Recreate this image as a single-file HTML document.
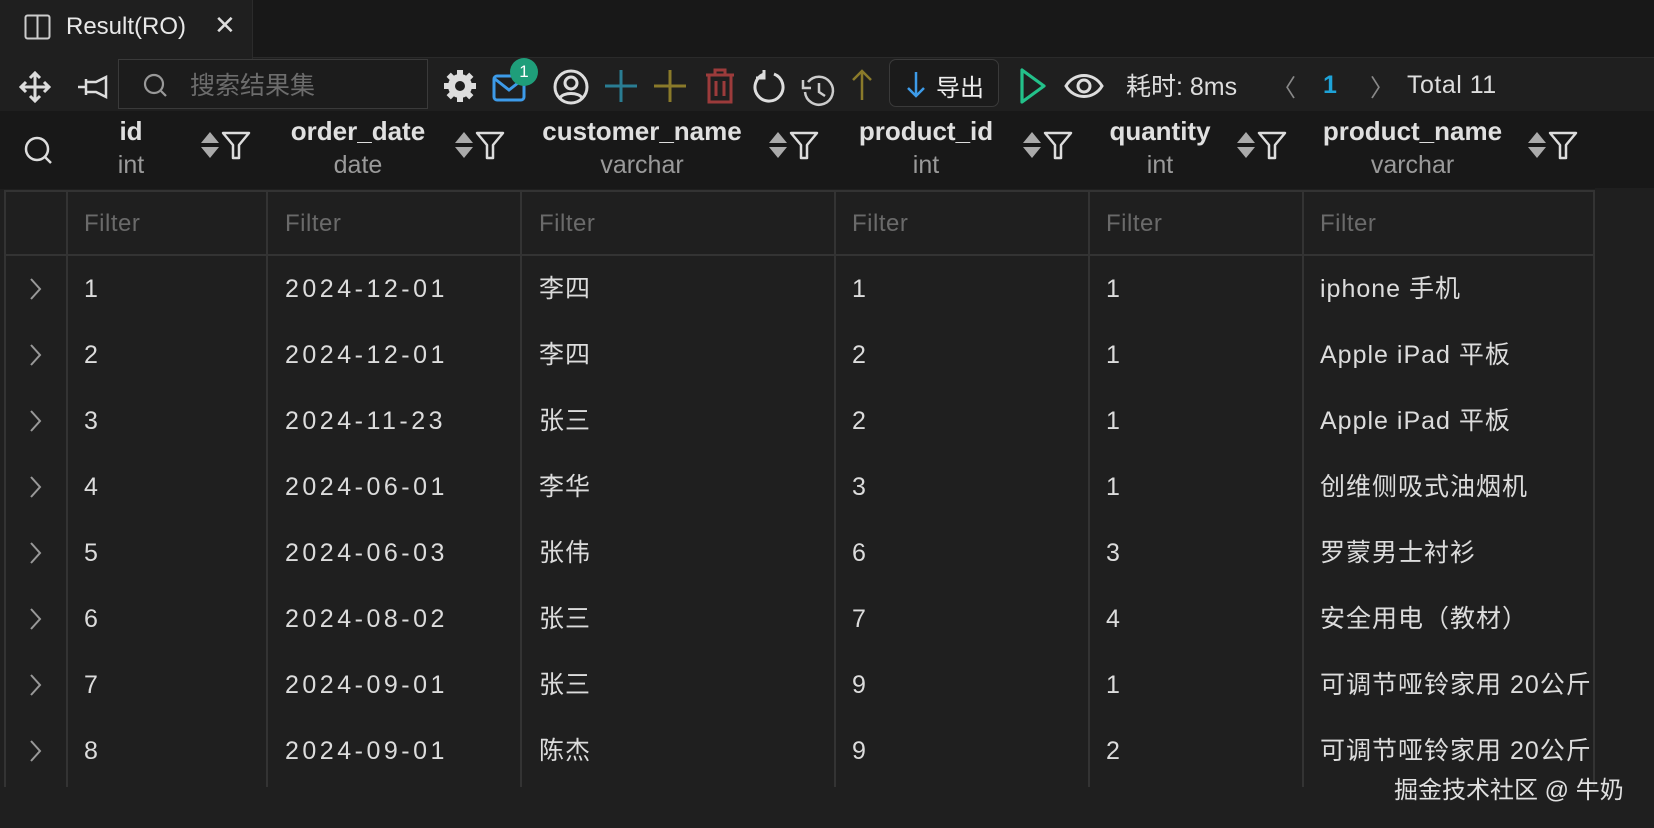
<!DOCTYPE html>
<html><head><meta charset="utf-8"><style>
*{margin:0;padding:0;box-sizing:border-box}
body{width:1654px;height:826px;background:#1f1f1f;position:relative;overflow:hidden;font-family:"Liberation Sans","Noto Sans CJK SC",sans-serif;color:#d4d4d4}
.a{position:absolute;white-space:nowrap}
.t{font-size:25px;letter-spacing:1.3px;color:#dcdcdc}
.f{font-size:24px;color:#6a6a6a;letter-spacing:.5px}
.h{font-size:26px;font-weight:bold;color:#e0e0e0;text-align:center}
.ty{font-size:25px;color:#9a9a9a;text-align:center}
.vl{position:absolute;width:2px;background:#333;top:190px;height:597px}
</style></head><body>
<div class="a" style="left:0;top:0;width:1654px;height:58px;background:#181818;border-bottom:1px solid #2a2a2a"></div>
<div class="a" style="left:0;top:0;width:253px;height:59px;background:#1f1f1f;border-right:1px solid #2b2b2b"></div>
<svg class="a" style="left:24px;top:14px" width="28" height="26"><rect x="1.5" y="1.5" width="24" height="23" rx="2" fill="none" stroke="#ccc" stroke-width="2"/><line x1="13.5" y1="2" x2="13.5" y2="24" stroke="#ccc" stroke-width="2"/></svg>
<div class="a" style="left:66px;top:13px;font-size:24px;color:#e8e8e8">Result(RO)</div>
<div class="a" style="left:214px;top:10px;font-size:26px;color:#ddd">✕</div>
<!-- toolbar -->
<svg class="a" style="left:18px;top:70px" width="34" height="34" fill="none" stroke="#ddd" stroke-width="3"><path d="M17 3v28M3 17h28M12 8l5-5 5 5M12 26l5 5 5-5M8 12l-5 5 5 5M26 12l5 5-5 5"/></svg>
<svg class="a" style="left:76px;top:73px" width="34" height="28" fill="none" stroke="#ddd" stroke-width="2.5"><path d="M2 14h8M10 6v16M10 9h10l10-5v20l-10-5H10"/></svg>
<div class="a" style="left:118px;top:59px;width:310px;height:50px;border:1px solid #3a3a3a;background:#1c1c1c"></div>
<svg class="a" style="left:142px;top:72px" width="28" height="28" fill="none" stroke="#999" stroke-width="2.2"><circle cx="12" cy="12" r="9"/><path d="M19 19l5 5"/></svg>
<div class="a" style="left:190px;top:66px;font-size:25px;color:#6c6c6c">搜索结果集</div>
<svg class="a" style="left:442px;top:68px" width="36" height="36"><g fill="#ddd"><circle cx="18" cy="18" r="12"/><g stroke="#ddd" stroke-width="6"><path d="M18 2v32M2 18h32M6.7 6.7l22.6 22.6M29.3 6.7L6.7 29.3"/></g></g><circle cx="18" cy="18" r="5" fill="#1f1f1f"/></svg>
<svg class="a" style="left:492px;top:70px" width="36" height="34" fill="none" stroke="#3d9be9" stroke-width="3"><rect x="2" y="6" width="30" height="24" rx="3"/><path d="M3 9l14 11 14-11"/></svg>
<div class="a" style="left:510px;top:58px;width:28px;height:28px;border-radius:14px;background:#1f9e7a;color:#fff;font-size:17px;text-align:center;line-height:28px">1</div>
<svg class="a" style="left:552px;top:68px" width="38" height="38" fill="none" stroke="#ddd" stroke-width="3"><circle cx="19" cy="19" r="16"/><circle cx="19" cy="15" r="6"/><path d="M8 30c3-6 19-6 22 0"/></svg>
<svg class="a" style="left:603px;top:68px" width="36" height="36" stroke="#2a7d93" stroke-width="3"><path d="M18 2v32M2 18h32"/></svg>
<svg class="a" style="left:652px;top:68px" width="36" height="36" stroke="#8a7a2a" stroke-width="3"><path d="M18 2v32M2 18h32"/></svg>
<svg class="a" style="left:704px;top:67px" width="32" height="38" fill="none" stroke="#9c3b3b" stroke-width="3"><path d="M2 8h28M11 8V3h10v5M5 8v27h22V8M12 14v15M20 14v15"/></svg>
<svg class="a" style="left:752px;top:68px" width="36" height="36" fill="none" stroke="#ddd" stroke-width="3"><path d="M12 6a14 14 0 1 0 10 0"/><path d="M12 2v8H4"/></svg>
<svg class="a" style="left:800px;top:72px" width="38" height="38" fill="none" stroke="#ccc" stroke-width="2.5"><path d="M8 10a14 14 0 1 1-3 10M3 8v8h8M19 11v9l6 4"/></svg>
<svg class="a" style="left:850px;top:68px" width="24" height="34" fill="none" stroke="#8a7a2a" stroke-width="2.5"><path d="M12 32V3M3 12l9-9 9 9"/></svg>
<div class="a" style="left:889px;top:59px;width:110px;height:48px;border:1px solid #3a3a3a;border-radius:7px;background:#1b1b1b"></div>
<svg class="a" style="left:906px;top:70px" width="20" height="28" fill="none" stroke="#3d9be9" stroke-width="2.5"><path d="M10 2v24M2 18l8 8 8-8"/></svg>
<div class="a" style="left:936px;top:68px;font-size:24px;color:#eee">导出</div>
<svg class="a" style="left:1018px;top:67px" width="30" height="38" fill="none" stroke="#23c18a" stroke-width="3.2"><path d="M4 3v32l22-16z" stroke-linejoin="round"/></svg>
<svg class="a" style="left:1064px;top:70px" width="40" height="32" fill="none" stroke="#ddd" stroke-width="3"><path d="M2 16C10 2 30 2 38 16C30 30 10 30 2 16Z"/><circle cx="20" cy="16" r="6"/></svg>
<div class="a" style="left:1126px;top:67px;font-size:25px;color:#ddd">耗时: 8ms</div>
<div class="a" style="left:1272px;top:68px;font-size:24px;color:#888">〈</div>
<div class="a" style="left:1323px;top:71px;font-size:25px;color:#1ea3d8;font-weight:bold">1</div>
<div class="a" style="left:1370px;top:68px;font-size:24px;color:#888">〉</div>
<div class="a" style="left:1407px;top:71px;font-size:25px;color:#ddd;letter-spacing:.5px">Total 11</div>
<!-- header -->
<div class="a" style="left:0;top:111px;width:1654px;height:78px;background:#181818"></div>
<svg class="a" style="left:24px;top:136px" width="30" height="30" fill="none" stroke="#ddd" stroke-width="2.5"><circle cx="13" cy="13" r="11"/><path d="M21 21l6 6"/></svg>
<div id="hdr"></div>
<!-- grid -->
<div class="a" style="left:4px;top:190px;width:1590px;height:2px;background:#333"></div>
<div class="a" style="left:4px;top:254px;width:1590px;height:2px;background:#333"></div>
<div class="vl" style="left:4px"></div><div class="vl" style="left:66px"></div><div class="vl" style="left:266px"></div><div class="vl" style="left:520px"></div><div class="vl" style="left:834px"></div><div class="vl" style="left:1088px"></div><div class="vl" style="left:1302px"></div><div class="vl" style="left:1593px"></div>
<div class="a" style="left:1595px;top:188px;width:59px;height:640px;background:#1f1f1f"></div>
<div class="a f" style="left:84px;top:210px">Filter</div>
<div class="a f" style="left:285px;top:210px">Filter</div>
<div class="a f" style="left:539px;top:210px">Filter</div>
<div class="a f" style="left:852px;top:210px">Filter</div>
<div class="a f" style="left:1106px;top:210px">Filter</div>
<div class="a f" style="left:1320px;top:210px">Filter</div>
<div id="rows"></div>
<div class="a" style="left:1394px;top:770px;font-size:24px;color:#e0e0e0">掘金技术社区 @ 牛奶</div>
<script>
var H=[["id","int",66,266],["order_date","date",266,520],["customer_name","varchar",520,834],["product_id","int",834,1088],["quantity","int",1088,1302],["product_name","varchar",1302,1593]];
var s="";H.forEach(function(h){var w=h[3]-h[2]-70;s+='<div class="a h" style="left:'+h[2]+'px;top:116px;width:'+w+'px;">'+h[0]+'</div><div class="a ty" style="left:'+h[2]+'px;top:151px;width:'+w+'px;">'+h[1]+'</div>';var x=h[3]-68;s+='<svg class="a" style="left:'+x+'px;top:128px" width="56" height="34"><path d="M3 15l9-11 9 11z M3 19l9 11 9-11z" fill="#aaa"/><path d="M25 5h26l-10 12v13h-6V17z" fill="none" stroke="#ddd" stroke-width="2.5" stroke-linejoin="round"/></svg>';});
document.getElementById("hdr").outerHTML=s;
var R=[["1","2024-12-01","李四","1","1","iphone 手机"],["2","2024-12-01","李四","2","1","Apple iPad 平板"],["3","2024-11-23","张三","2","1","Apple iPad 平板"],["4","2024-06-01","李华","3","1","创维侧吸式油烟机"],["5","2024-06-03","张伟","6","3","罗蒙男士衬衫"],["6","2024-08-02","张三","7","4","安全用电（教材）"],["7","2024-09-01","张三","9","1","可调节哑铃家用 20公斤"],["8","2024-09-01","陈杰","9","2","可调节哑铃家用 20公斤"]];
var X=[84,285,539,852,1106,1320];s="";
R.forEach(function(r,i){var y=275+i*66;s+='<svg class="a" style="left:27px;top:'+(y+1)+'px" width="16" height="26" fill="none" stroke="#999" stroke-width="2"><path d="M4 3l9 10-9 10"/></svg>';r.forEach(function(v,j){var cj=(j==2||j==5);s+='<div class="a t" style="left:'+X[j]+'px;top:'+(cj?y-6:y)+'px;letter-spacing:'+(cj?'1px':'3.5px')+';'+(j==5?'width:272px;overflow:hidden':'')+'">'+v+'</div>';});});
document.getElementById("rows").outerHTML=s;
</script>
</body></html>
